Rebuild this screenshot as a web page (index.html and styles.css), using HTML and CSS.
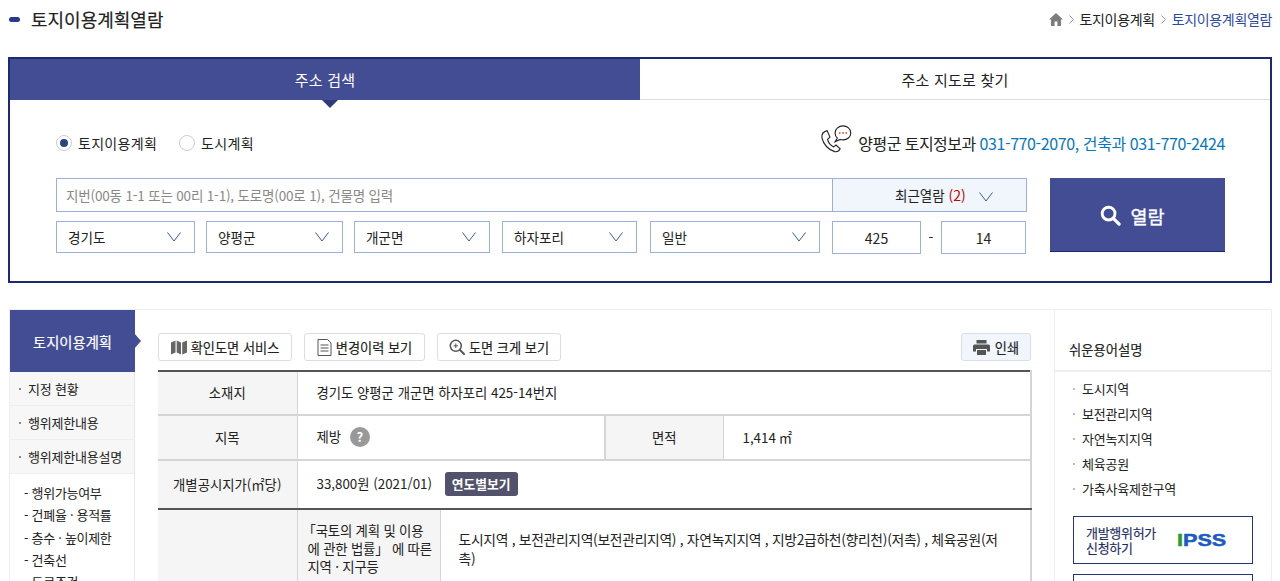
FILE: index.html
```html
<!DOCTYPE html>
<html lang="ko">
<head>
<meta charset="utf-8">
<title>토지이용계획열람</title>
<link rel="stylesheet" href="styles.css">
</head>
<body>
<div class="page">
  <header class="top">
    <h1 class="title"><span class="dash"></span>토지이용계획열람</h1>
    <nav class="crumbs">
      <svg class="home" viewBox="0 0 14 13" width="14" height="13"><path fill="#7d7d7d" d="M7 0 L14 6.6 H12 V13 H8.4 V8.6 H5.6 V13 H2 V6.6 H0 Z"/></svg>
      <svg class="sep" viewBox="0 0 5 9" width="5" height="9"><path fill="none" stroke="#999" d="M.5.5 4.5 4.5.5 8.500"/></svg>
      <span>토지이용계획</span>
      <svg class="sep" viewBox="0 0 5 9" width="5" height="9"><path fill="none" stroke="#999" d="M.5.5 4.5 4.5.5 8.500"/></svg>
      <span class="current">토지이용계획열람</span>
    </nav>
  </header>

  <section class="search">
    <div class="tabs">
      <div class="tab active">주소 검색</div>
      <div class="tab">주소 지도로 찾기</div>
    </div>
    <div class="search-body">
      <div class="info-row">
        <div class="radios">
          <span class="radio on"></span><span class="radio-label">토지이용계획</span>
          <span class="radio"></span><span class="radio-label">도시계획</span>
        </div>
        <div class="contact">
          <svg class="phone" viewBox="0 0 33 30" width="32" height="28">
            <path fill="none" stroke="#222" stroke-width="1.2" d="M7 6 C3 7 .8 10 1.500 14 C3 21 9 27 15 28.500 C18 29 20 27.500 21 25.500 L16.500 21.500 L14 23.500 C11 22 8 18.500 7.500 15.500 L10 13 Z"/>
            <path fill="#fff" stroke="#222" stroke-width="1.2" d="M24 1 C19.500 1 15.500 4 15.500 8.500 C15.500 11 16.500 12.800 18 14 L15.500 18 L21 15.500 C22 15.800 23 16 24 16 C28.500 16 32.300 13 32.300 8.500 C32.300 4 28.500 1 24 1 Z"/>
            <circle cx="20.500" cy="8.500" r="1" fill="#e2502c"/><circle cx="24" cy="8.500" r="1" fill="#e2502c"/><circle cx="27.500" cy="8.500" r="1" fill="#e2502c"/>
          </svg>
          <span class="contact-text">양평군 토지정보과 <span class="tel">031-770-2070, 건축과 031-770-2424</span></span>
        </div>
      </div>
      <div class="form-row">
        <div class="fields">
          <div class="address-line">
            <div class="address-input">지번(00동 1-1 또는 00리 1-1), 도로명(00로 1), 건물명 입력</div>
            <div class="recent">최근열람 <span class="count">(2)</span>
              <svg class="chev" viewBox="0 0 14 10" width="14" height="10"><path d="M.5.5 7 9 13.500.5"/></svg>
            </div>
          </div>
          <div class="select-line">
            <div class="select s1">경기도<svg class="chev" viewBox="0 0 14 10" width="14" height="10"><path d="M.5.5 7 9 13.500.5"/></svg></div>
            <div class="select s2">양평군<svg class="chev" viewBox="0 0 14 10" width="14" height="10"><path d="M.5.5 7 9 13.500.5"/></svg></div>
            <div class="select s3">개군면<svg class="chev" viewBox="0 0 14 10" width="14" height="10"><path d="M.5.5 7 9 13.500.5"/></svg></div>
            <div class="select s4">하자포리<svg class="chev" viewBox="0 0 14 10" width="14" height="10"><path d="M.5.5 7 9 13.500.5"/></svg></div>
            <div class="select s5">일반<svg class="chev" viewBox="0 0 14 10" width="14" height="10"><path d="M.5.5 7 9 13.500.5"/></svg></div>
            <div class="num n1">425</div>
            <span class="hyphen">-</span>
            <div class="num n2">14</div>
          </div>
        </div>
        <div class="go">
          <svg viewBox="0 0 22 22" width="21" height="21"><circle cx="9" cy="9" r="6.700" fill="none" stroke="#fff" stroke-width="3"/><path d="M14 14 20 20" stroke="#fff" stroke-width="3.400" stroke-linecap="round"/></svg>
          열람
        </div>
      </div>
    </div>
  </section>

  <section class="content">
    <aside class="side">
      <div class="side-head">토지이용계획</div>
      <ul class="side-menu">
        <li>지정 현황</li>
        <li>행위제한내용</li>
        <li>행위제한내용설명</li>
      </ul>
      <ul class="side-sub">
        <li>- 행위가능여부</li>
        <li>- 건폐율 · 용적률</li>
        <li>- 층수 · 높이제한</li>
        <li>- 건축선</li>
        <li>- 도로조건</li>
      </ul>
    </aside>

    <main class="main">
      <div class="tools">
        <div class="tool t1">
          <svg viewBox="0 0 16 15" width="16" height="15"><path fill="#666" d="M0 2.500 4.500 0.500V12.500L0 14.500ZM5.700.5 10 2.500V14.500L5.700 12.500ZM11.200 2.500 16 .5V12.500L11.200 14.500Z"/></svg>
          확인도면 서비스</div>
        <div class="tool t2">
          <svg viewBox="0 0 15 17" width="15" height="17"><path fill="none" stroke="#555" d="M1 .5H10.500L14 4V16.500H1ZM3.500 6H11.500M3.500 9H11.500M3.500 12H11.500"/></svg>
          변경이력 보기</div>
        <div class="tool t3">
          <svg viewBox="0 0 16 16" width="16" height="16"><circle cx="6.800" cy="6.800" r="5.500" fill="none" stroke="#555" stroke-width="1.500"/><path d="M11 11 15 15" stroke="#555" stroke-width="2" stroke-linecap="round"/><path d="M4.500 6.800H9M6.800 4.500V9" stroke="#555"/></svg>
          도면 크게 보기</div>
        <div class="tool print">
          <svg viewBox="0 0 17 15" width="17" height="15"><path fill="#555" d="M3.500 0H13.500V3.500H3.500ZM1.500 4.500H15.500Q17 4.500 17 6V11.500H14V9H3V11.500H0V6Q0 4.500 1.500 4.500ZM4 10H13V15H4Z"/></svg>
          인쇄</div>
      </div>
      <table class="grid">
        <colgroup><col class="c1"><col class="c2"><col class="c3"><col class="c4"><col class="c5"></colgroup>
        <tr class="r1"><th>소재지</th><td colspan="4">경기도 양평군 개군면 하자포리 425-14번지</td></tr>
        <tr class="r2"><th>지목</th><td colspan="2">제방 <span class="help">?</span></td><th>면적</th><td>1,414 ㎡</td></tr>
        <tr class="r3"><th>개별공시지가(㎡당)</th><td colspan="4">33,800원 (2021/01) <span class="year">연도별보기</span></td></tr>
        <tr class="r4"><th></th><th class="law"><span class="bracket">「</span>국토의 계획 및 이용<br>에 관한 법률」 에 따른<br>지역 · 지구등</th><td colspan="3" class="zones">도시지역 , 보전관리지역(보전관리지역) , 자연녹지지역 , 지방2급하천(향리천)(저촉) , 체육공원(저촉)</td></tr>
      </table>
    </main>

    <aside class="terms">
      <h2 class="terms-head">쉬운용어설명</h2>
      <ul class="terms-list">
        <li>도시지역</li>
        <li>보전관리지역</li>
        <li>자연녹지지역</li>
        <li>체육공원</li>
        <li>가축사육제한구역</li>
      </ul>
      <div class="banner">
        <span class="banner-text">개발행위허가<br>신청하기</span>
        <span class="logo"><span class="logo-i">I</span>PSS</span>
      </div>
      <div class="banner"></div>
    </aside>
  </section>
</div>
</body>
</html>
```
FILE: styles.css
```css
* { box-sizing: border-box; }
html, body { margin: 0; height: 581px; overflow: hidden; background: #fff; }
body { font-family: "Noto Sans CJK KR", "Noto Sans", sans-serif; color: #222; font-size: 14px; }
ul { list-style: none; margin: 0; padding: 0; }
.page { width: 1280px; padding-left: 8px; }

.top { width: 1264px; height: 57px; display: flex; justify-content: space-between; align-items: flex-start; padding-top: 6px; }
.title { margin: 0; font-size: 18px; font-weight: 400; line-height: 26px; display: flex; align-items: center; color: #222; -webkit-text-stroke: .2px #222; }
.dash { width: 11px; height: 5px; border-radius: 3px; background: #2b3a86; margin: 0 11px 0 1px; }
.crumbs { display: flex; align-items: center; gap: 5px; font-size: 14px; line-height: 26px; letter-spacing: -.35px; }
.sep { margin: 0 1px; }
.current { color: #2f4a9c; }

.search { width: 1264px; height: 226px; border: 2px solid #1d2a72; display: flex; flex-direction: column; }
.tabs { display: flex; height: 41px; flex: none; border-bottom: 1px solid #ddd; }
.tab { width: 50%; display: flex; align-items: center; justify-content: center; font-size: 15px; letter-spacing: .2px; }
.tab.active { background: #434d94; color: #fff; position: relative; margin-bottom: -1px; }
.tab.active::after { content: ""; position: absolute; left: 50%; bottom: -8px; margin-left: -3px; border: 8px solid transparent; border-bottom: 0; border-top: 8px solid #2f3a7e; }
.search-body { padding: 12px 45px 0 46px; flex: 1; }
.info-row { display: flex; justify-content: space-between; align-items: flex-end; height: 53px; }
.radios { display: flex; align-items: center; height: 30px; font-size: 14px; margin-bottom: 7px; letter-spacing: .3px; }
.radio { width: 16px; height: 16px; border-radius: 50%; border: 1px solid #ccc; margin-right: 6px; background: #fff; display: flex; align-items: center; justify-content: center; }
.radio.on::after { content: ""; width: 8px; height: 8px; border-radius: 50%; background: #2a4480; }
.radio-label { margin-right: 22px; }
.contact { display: flex; align-items: flex-end; }
.phone { margin-right: 6px; margin-bottom: 12px; }
.contact-text { font-size: 16px; letter-spacing: -.55px; line-height: 24px; margin-bottom: 10px; }
.tel { color: #0a77b8; letter-spacing: -.4px; }
.form-row { display: flex; justify-content: space-between; margin-top: 13px; }
.fields { width: 971px; }
.address-line { display: flex; height: 34px; border: 1px solid #9cb0d8; }
.address-input { flex: 1; padding-left: 9px; font-size: 13.500px; line-height: 32px; color: #888; letter-spacing: -.17px; }
.recent { width: 194px; border-left: 1px solid #9cb0d8; background: #f1f6fd; font-size: 13.500px; line-height: 32px; text-align: left; padding-left: 62px; white-space: nowrap; }
.count { color: #c00000; font-size: 14px; }
.chev { fill: none; stroke: #3d5a9c; stroke-width: 1; }
.recent .chev { margin-left: 10px; vertical-align: -1px; }
.select-line { display: flex; align-items: flex-start; margin-top: 9px; }
.select { height: 32px; border: 1px solid #9cb0d8; padding: 0 13px 0 11px; display: flex; align-items: center; justify-content: space-between; font-size: 13.600px; }
.s1 { width: 139px; margin-right: 11px; }
.s2 { width: 137px; margin-right: 11px; }
.s3 { width: 136px; margin-right: 12px; }
.s4 { width: 135px; margin-right: 13px; }
.s5 { width: 170px; margin-right: 12px; }
.num { height: 33px; border: 1px solid #9cb0d8; display: flex; align-items: center; justify-content: center; font-size: 14px; }
.n1 { width: 89px; }
.n2 { width: 85px; }
.hyphen { width: 20px; text-align: center; line-height: 33px; }
.go { width: 175px; height: 74px; background: #434d94; border-bottom: 1px solid #1d2a72; color: #fff; font-size: 18.500px; display: flex; align-items: center; justify-content: center; gap: 9px; -webkit-text-stroke: .3px #fff; padding: 2px 10px 0 0; }

.content { width: 1263px; margin: 26px 0 0 1px; border: 1px solid #eee; border-bottom: 0; display: flex; height: 272px; overflow: hidden; }
.side { width: 125px; flex: none; border-right: 1px solid #e8e8e8; }
.side-head { height: 62px; background: #434d94; color: #fff; display: flex; align-items: center; justify-content: center; font-size: 14.300px; position: relative; margin-right: -1px; -webkit-text-stroke: .2px #fff; }
.side-menu li { height: 34px; line-height: 33px; background: #f7f7f7; border-bottom: 1px solid #eee; padding-left: 18px; font-size: 13px; position: relative; letter-spacing: -.2px; }
.side-menu li::before { content: ""; position: absolute; left: 9px; top: 16px; width: 2px; height: 2px; background: #888; }
.side-sub { padding: 8px 0 0 14px; font-size: 13px; letter-spacing: -.3px; }
.side-sub li { height: 22.300px; line-height: 22px; }

.main { width: 919px; flex: none; padding: 23px 0 0 23px; position: relative; }
.main::before { content: ""; position: absolute; left: -1px; top: 23px; border: 8px solid transparent; border-right: 0; border-left: 7px solid #434d94; }
.tools { display: flex; width: 873px; height: 28px; gap: 12px; }
.tool { height: 28px; border: 1px solid #ddd; border-radius: 3px; display: flex; align-items: center; justify-content: center; gap: 4px; font-size: 13.200px; background: #fff; -webkit-text-stroke: .15px #222; }
.t1 { width: 134px; }
.t2 { width: 121px; }
.t3 { width: 124px; }
.print { width: 70px; margin-left: auto; background: #f1f6fd; border-color: #d8dfe8; gap: 5px; }
.grid { width: 873px; table-layout: fixed; border-collapse: collapse; margin-top: 9px; border-top: 2px solid #555; font-size: 13.350px; }
.c1 { width: 139px; } .c2 { width: 143px; } .c3 { width: 165px; } .c4 { width: 118px; } .c5 { width: 308px; }
.grid th, .grid td { border: 1px solid #d5d5d5; border-width: 0 2px 2px 0; font-weight: 400; padding-bottom: 2px; }
.grid th { background: #f5f5f5; border-right-width: 1px; }
.grid td { padding-left: 19px; padding-right: 0; }
.r1 { height: 44px; } .r2 { height: 45px; } .r3 { height: 49px; }
.grid .r3 th, .grid .r3 td { border-bottom: 2px solid #555; }
.help { display: inline-block; width: 20px; height: 20px; border-radius: 50%; background: #999; color: #fff; text-align: center; line-height: 20px; font-weight: 700; font-size: 13px; margin-left: 5px; }
.year { display: inline-block; background: #52536a; color: #fff; border-radius: 3px; height: 24px; line-height: 24px; padding: 0 7px; margin-left: 9px; font-size: 12.800px; font-weight: 700; }
.grid .law { text-align: left; padding: 11px 4px 0 10px; line-height: 18px; vertical-align: top; letter-spacing: -.2px; font-size: 13.400px; white-space: nowrap; }
.bracket { margin-left: -5px; }
.grid .zones { padding: 20px 28px 0 18px; line-height: 19px; vertical-align: top; font-size: 13.800px; letter-spacing: -.3px; word-break: break-all; }
.r4 { height: 120px; }

.terms { flex: 1; border-left: 1px solid #eee; margin-left: 0; }
.terms-head { margin: 0; height: 62px; border-bottom: 2px solid #eee; padding: 31px 0 0 14px; font-size: 13.300px; font-weight: 400; line-height: 18px; -webkit-text-stroke: .15px #222; }
.terms-list { padding: 5px 0 0 27px; font-size: 13px; letter-spacing: -.2px; }
.terms-list li { height: 24.900px; line-height: 24px; position: relative; }
.terms-list li::before { content: ""; position: absolute; left: -9px; top: 11px; width: 2px; height: 2px; background: #bbb; }
.banner { width: 180px; height: 48px; margin: 0 0 10px 18px; border: 1px solid #26367e; display: flex; align-items: center; padding-left: 12px; font-size: 13px; line-height: 15px; letter-spacing: -.3px; }
.terms-list + .banner { margin-top: 15px; }
.banner-text { color: #1f2d5e; -webkit-text-stroke: .15px #1f2d5e; width: 91px; flex: none; }
.logo { font-family: "Liberation Sans", sans-serif; font-weight: 700; font-size: 17px; color: #1d5bbf; letter-spacing: 0; display: inline-block; transform: scaleX(1.27); transform-origin: left center; -webkit-text-stroke: .5px #1d5bbf; }
.logo-i { color: #2c9a3a; -webkit-text-stroke: .5px #2c9a3a; }
```
